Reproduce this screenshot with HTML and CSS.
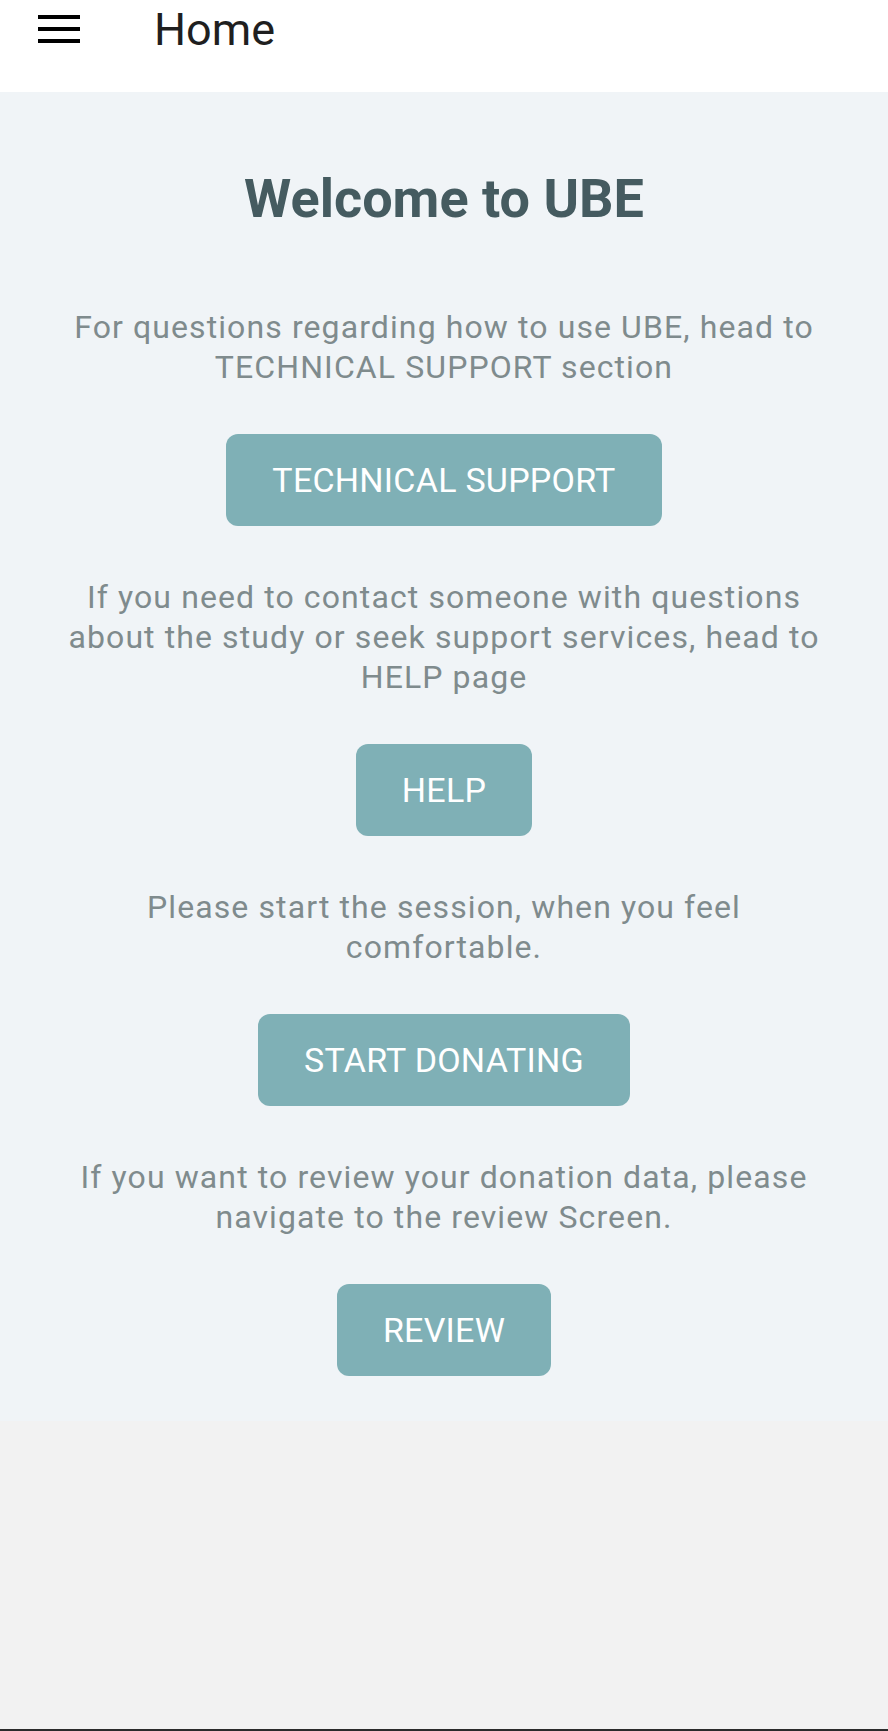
FILE: index.html
```html
<!DOCTYPE html>
<html>
<head>
<meta charset="utf-8">
<link rel="stylesheet" href="styles.css">
</head>
<body>
<div class="app">
  <header class="topbar">
    <div class="menu-btn">
      <svg width="42" height="28" viewBox="0 0 42 28"><rect x="0" y="0" width="42" height="4" fill="#000"/><rect x="0" y="12" width="42" height="4" fill="#000"/><rect x="0" y="24" width="42" height="4" fill="#000"/></svg>
    </div>
    <div class="topbar-title">Home</div>
  </header>
  <main class="content">
    <h1 class="welcome">Welcome to UBE</h1>
    <section class="block">
      <p class="info">For questions regarding how to use UBE, head to<br>TECHNICAL SUPPORT section</p>
      <div class="btn btn-tech">TECHNICAL SUPPORT</div>
    </section>
    <section class="block">
      <p class="info">If you need to contact someone with questions<br>about the study or seek support services, head to<br>HELP page</p>
      <div class="btn btn-help">HELP</div>
    </section>
    <section class="block">
      <p class="info">Please start the session, when you feel<br>comfortable.</p>
      <div class="btn btn-start">START DONATING</div>
    </section>
    <section class="block">
      <p class="info">If you want to review your donation data, please<br>navigate to the review Screen.</p>
      <div class="btn btn-review">REVIEW</div>
    </section>
  </main>
  <div class="filler"></div>
  <div class="bottom-line"></div>
</div>
</body>
</html>
```

FILE: styles.css
```css
html, body {
  margin: 0;
  padding: 0;
}
body {
  font-family: Roboto, "Liberation Sans", Arial, sans-serif;
  background: #f2f2f2;
}
.app {
  width: 888px;
  height: 1731px;
  display: flex;
  flex-direction: column;
}
.topbar {
  height: 92px;
  background: #ffffff;
  display: flex;
  align-items: flex-start;
  flex-shrink: 0;
}
.menu-btn {
  margin: 15px 0 0 38px;
  width: 42px;
  height: 28px;
  display: flex;
}
.topbar-title {
  margin-left: 74px;
  margin-top: 2px;
  font-size: 45px;
  line-height: 56px;
  color: #1f1f1f;
}
.content {
  background: #f0f4f7;
  display: flex;
  flex-direction: column;
  align-items: center;
  padding: 74px 0 45px;
  flex-shrink: 0;
}
.welcome {
  margin: 0 0 75px;
  font-size: 54px;
  line-height: 66px;
  font-weight: 700;
  color: #455b60;
}
.block {
  display: flex;
  flex-direction: column;
  align-items: center;
  margin-bottom: 51px;
}
.block:last-child {
  margin-bottom: 0;
}
.info {
  margin: 0 0 47px;
  font-size: 32px;
  line-height: 40px;
  letter-spacing: 1.1px;
  color: #7f8b8d;
  text-align: center;
}
.btn {
  height: 92px;
  padding: 0 46px;
  display: flex;
  align-items: center;
  justify-content: center;
  background: #7fb0b6;
  color: #ffffff;
  font-size: 34px;
  letter-spacing: 0.25px;
  border-radius: 12px;
}
.filler {
  flex: 1;
  background: #f2f2f2;
}
.bottom-line {
  height: 2px;
  background: #2b2b2b;
  flex-shrink: 0;
}
```
